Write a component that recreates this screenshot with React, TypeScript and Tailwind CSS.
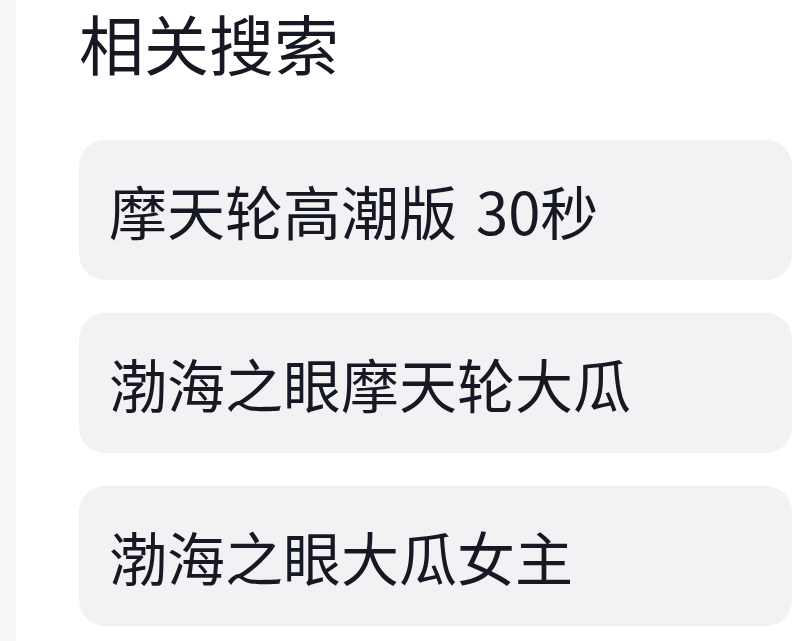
const items = ["摩天轮高潮版 30秒", "渤海之眼摩天轮大瓜", "渤海之眼大瓜女主"];

export default function App() {
  return (
    <div
      className="flex w-[800px] h-[641px] overflow-hidden bg-white text-[#161823]"
      style={{ fontFamily: '"Noto Sans CJK SC", "Noto Sans", sans-serif' }}
    >
      <div className="w-[16px] shrink-0 bg-[#f6f6f6]"></div>
      <div className="flex-1 flex flex-col pl-[63px] pr-[8px] pt-[4px]">
        <h2 className="text-[65px] leading-[76px] font-normal">相关搜索</h2>
        <div className="flex flex-col gap-[33px] mt-[60px]">
          {items.map((t, i) => (
            <div
              key={i}
              className="h-[140px] rounded-[26px] bg-[#f2f2f4] flex items-center pl-[30px]"
            >
              <span className="text-[58px] leading-none [word-spacing:6px]">
                {t}
              </span>
            </div>
          ))}
        </div>
      </div>
    </div>
  );
}
